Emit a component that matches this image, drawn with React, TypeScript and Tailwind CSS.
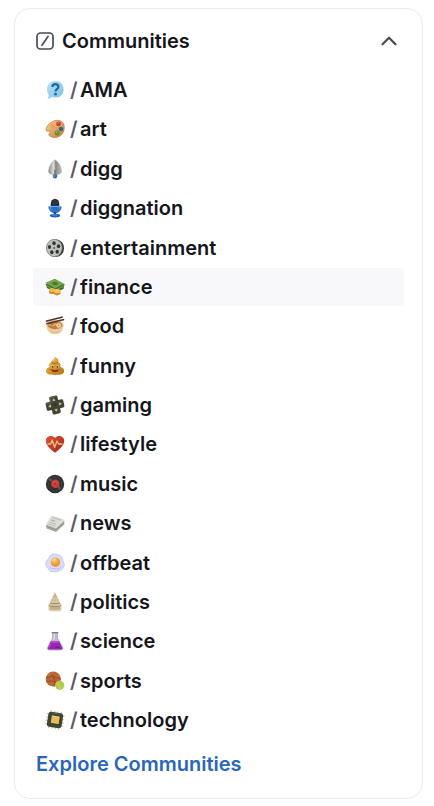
import type { ReactNode } from "react";

type Community = { name: string; icon: ReactNode; active?: boolean };

function Icon({ children }: { children: ReactNode }) {
  return (
    <svg viewBox="0 0 20 20" className="size-5 shrink-0" fill="none" aria-hidden="true">
      {children}
    </svg>
  );
}

const communities: Community[] = [
  {
    name: "AMA",
    icon: (
      <Icon>
        <defs>
          <linearGradient id="bubble" x1="0" y1="0" x2="1" y2="1">
            <stop stopColor="#b7e4fa" />
            <stop offset="1" stopColor="#7fc0e6" />
          </linearGradient>
        </defs>
        <path d="M10.5 1C15.4 1 18.6 4.4 18.6 9.2s-3.4 8.3-8.2 8.3c-1.3 0-2.4-.2-3.4-.7-1.2 1.3-2.9 2-4.7 2 .9-1 1.4-2.2 1.4-3.7A8 8 0 0 1 2 9.3C2 4.500 5.600 1 10.500 1Z" fill="url(#bubble)" />
        <path d="M7.300 7c.1-1.900 1.200-2.900 3-2.900 1.900 0 3.100 1 3.100 2.600 0 2.500-2.900 2.300-2.900 4.700" stroke="#23679f" strokeWidth="2.200" />
        <circle cx="10.500" cy="14.200" r="1.400" fill="#23679f" />
      </Icon>
    ),
  },
  {
    name: "art",
    icon: (
      <Icon>
        <defs>
          <linearGradient id="palette" x1="0" y1="0" x2="1" y2="1">
            <stop stopColor="#fbd29a" />
            <stop offset="1" stopColor="#c8783a" />
          </linearGradient>
        </defs>
        <path d="M12.500 1.300c4.300 0 6.800 3 6.800 7.200 0 5.700-4.200 10-9.200 10-3.700 0-6.500-1.500-6.300-3.400.2-1.400 2.200-1.500 1.900-2.500-.4-1-2.900.4-4.300-.9C-.5 9.500 4.800 1.300 12.500 1.300Z" fill="url(#palette)" stroke="#b9682b" strokeWidth=".6" />
        <circle cx="7.300" cy="7" r="2" fill="#efa342" />
        <circle cx="13.500" cy="4.900" r="2.400" fill="#cf4030" />
        <circle cx="16" cy="9.900" r="2.200" fill="#2b6980" />
        <circle cx="12.200" cy="14" r="2.500" fill="#61942f" />
        <circle cx="13" cy="4" r=".8" fill="#f37c63" />
        <circle cx="11.600" cy="13.300" r=".8" fill="#a1c955" />
      </Icon>
    ),
  },
  {
    name: "digg",
    icon: (
      <Icon>
        <defs>
          <linearGradient id="trowel">
            <stop stopColor="#8d8e8f" />
            <stop offset=".4" stopColor="#deded9" />
            <stop offset=".55" stopColor="#858786" />
            <stop offset="1" stopColor="#c2c2be" />
          </linearGradient>
        </defs>
        <path d="M10 .8c3.500 2.500 6 6 6.600 11 .1 1.800-.8 3-2.400 3.200l-3 .5H9l-3-.5c-1.800-.2-2.600-1.400-2.400-3.200C4 6.800 6.500 3.300 10 .8Z" fill="url(#trowel)" stroke="#9b9c99" strokeWidth=".5" />
        <path d="M9.200 11h1.600v5H9.200z" fill="#747a7c" />
        <path d="M7.800 15.500h4.400v2.300a2.200 1.800 0 0 1-4.400 0Z" fill="#3c6b9a" />
        <path d="M9 16v2" stroke="#83add0" />
      </Icon>
    ),
  },
  {
    name: "diggnation",
    icon: (
      <Icon>
        <path d="M4.200 8.500c0 7.900 11.600 7.900 11.600 0" stroke="#2f6cc5" strokeWidth="1.800" />
        <path d="M5.700 6a4.300 5.200 0 0 1 8.600 0v2.500H5.700Z" fill="#242c3a" />
        <path d="M5.500 7.800h9v2.700c0 5.100-9 5.100-9 0Z" fill="#2d70cc" />
        <path d="M6 8.500h8" stroke="#68a8f3" />
        <path d="M10 14v3" stroke="#184b96" strokeWidth="2.500" />
        <ellipse cx="10" cy="17.600" rx="5.200" ry="1.900" fill="#2461b5" />
        <path d="M7 17h5" stroke="#67a5eb" strokeWidth=".8" />
        <path d="M8 3v3m2-4v4m2-3v3" stroke="#46566b" strokeWidth=".5" />
      </Icon>
    ),
  },
  {
    name: "entertainment",
    icon: (
      <Icon>
        <ellipse cx="11.300" cy="10.200" rx="7.700" ry="8.700" fill="#323535" />
        <ellipse cx="9.300" cy="10" rx="7.900" ry="8.700" fill="#bfc0bc" stroke="#6a6e6c" strokeWidth=".7" />
        <ellipse cx="9" cy="5.200" rx="1.700" ry="2" fill="#303332" />
        <ellipse cx="13.500" cy="8.200" rx="1.700" ry="2" fill="#303332" />
        <ellipse cx="12.200" cy="13.700" rx="1.700" ry="2" fill="#303332" />
        <ellipse cx="6.800" cy="14.200" rx="1.700" ry="2" fill="#303332" />
        <ellipse cx="4.500" cy="9" rx="1.600" ry="2" fill="#303332" />
        <circle cx="9.200" cy="10" r="1" fill="#5a5d5b" />
      </Icon>
    ),
  },
  {
    name: "finance",
    active: true,
    icon: (
      <Icon>
        <path d="M.5 6.500 2 11l7.500 4.500L18.500 12l1-5-10.200 2Z" fill="#416d29" />
        <path d="m.5 5.800 9.300-4L19.500 7 10 11.500Z" fill="#699c42" />
        <path d="m1.300 8.500 8.500 4.700 9-4" stroke="#9dba67" strokeWidth=".7" />
        <path d="m3.200 5.900 6.500-2.800 6.800 3.800-6.600 3.200Z" stroke="#8db55c" strokeWidth=".7" />
        <ellipse cx="10" cy="6.600" rx="2.600" ry="1.500" fill="#48752d" />
        <path d="M4 12.500v3c1 2 5 2 6 0v-3Z" fill="#cf8b2e" />
        <ellipse cx="7" cy="13" rx="3" ry="1.900" fill="#f0b94e" />
        <path d="M9 14v3c1 1.900 5.500 1.900 6.500-.4v-3Z" fill="#d3902e" />
        <ellipse cx="12.200" cy="14" rx="3.200" ry="2" fill="#f7c65c" />
      </Icon>
    ),
  },
  {
    name: "food",
    icon: (
      <Icon>
        <path d="M1.500 8.500c0 7 3.200 9.800 8.500 9.800s8.500-2.800 8.500-9.800Z" fill="#ecd0a1" />
        <ellipse cx="10" cy="9" rx="8.500" ry="5" fill="#e8c391" />
        <ellipse cx="10" cy="9.300" rx="7.200" ry="3.900" fill="#c17b46" />
        <path d="M4 9.500c2-2.500 3 1.500 5-.5s3 1.500 4-1" stroke="#eab568" strokeWidth="1.600" />
        <circle cx="13.700" cy="9.500" r="2.300" fill="#fae2b0" />
        <circle cx="13.700" cy="9.500" r="1.100" fill="#df973e" />
        <path d="M5.500 8.500h2.500" stroke="#788a3e" strokeWidth="1.600" />
        <path d="M.8 5.200 17.800 1M1.200 7.800 19.200 3.500" stroke="#53362b" strokeWidth="1.500" />
        <path d="M5 15c3 2 7 2 10-.3" stroke="#d8b17b" strokeWidth=".8" />
      </Icon>
    ),
  },
  {
    name: "funny",
    icon: (
      <Icon>
        <defs>
          <linearGradient id="swirl" x1="0" y1="0" x2="1" y2="1">
            <stop stopColor="#f3bf4b" />
            <stop offset="1" stopColor="#b96f1b" />
          </linearGradient>
        </defs>
        <path d="M9.500 1c3.300 1 4.800 3 3.800 5.300 2.300.6 3 3 1.800 4.800 2.500.2 4 2 4 3.900 0 2.800-2.500 3.900-9 3.900S1 17.800 1 15c0-2 1.500-3.600 3.800-3.900C3.400 9.300 4 7 6.300 6.300c-.7-2 3.400-2.600 3.200-5.300Z" fill="url(#swirl)" />
        <path d="M6.500 6.700c2 1.200 5 1 6.500-.5M4.500 13.200c2 .6 3 .5 4 0m3 0c1.500.5 3 .5 4-.1" stroke="#9c5b1a" strokeWidth=".8" />
        <circle cx="7.500" cy="10.500" r="1.300" fill="#f8d482" />
        <circle cx="12.500" cy="10.500" r="1.300" fill="#f8d482" />
        <circle cx="7.600" cy="10.800" r=".9" fill="#4b2c0e" />
        <circle cx="12.400" cy="10.800" r=".9" fill="#4b2c0e" />
        <path d="M6.200 14c1 3 6.500 3 7.500 0Z" fill="#70390f" />
        <path d="M7.500 4.800c2-.5 2-1.500 2.200-2" stroke="#ffe081" strokeWidth=".8" />
      </Icon>
    ),
  },
  {
    name: "gaming",
    icon: (
      <Icon>
        <g transform="rotate(-13 10 10)">
          <path d="M7.300 1h5.400q1.500 0 1.500 1.500v3.300h3.300q1.500 0 1.500 1.500v5.400q0 1.500-1.500 1.500h-3.300v3.300q0 1.500-1.500 1.500H7.300q-1.500 0-1.500-1.500v-3.300H2.500Q1 14.200 1 12.700V7.300q0-1.500 1.500-1.500h3.300V2.500Q5.800 1 7.300 1Z" fill="#41433a" />
          <path d="M6.700 6.500V2.300q0-.5.8-.5h5M2 7h4.500" stroke="#6c6e60" strokeWidth=".8" />
          <path d="m10 3.500 1.200 2H8.800Zm0 13-1.200-2h2.400ZM3.500 10l2-1.200v2.400Zm13 0-2-1.200v2.400Z" fill="#d4d04f" stroke="#d4d04f" strokeWidth=".6" />
          <circle cx="10" cy="10" r="1.700" fill="#34362f" />
        </g>
      </Icon>
    ),
  },
  {
    name: "lifestyle",
    icon: (
      <Icon>
        <defs>
          <linearGradient id="heart" x1="0" y1="0" x2="1" y2="1">
            <stop stopColor="#e0563a" />
            <stop offset="1" stopColor="#9c261b" />
          </linearGradient>
        </defs>
        <path d="M10 18.800C4.500 14.500.8 11.200.8 6.800.8 2 7 .3 10 4c3-3.700 9.200-2 9.200 2.800 0 4.400-3.700 7.700-9.200 12Z" fill="url(#heart)" />
        <path d="M2.500 10h3.200l1.500-4 2.400 7.500L12 7l1.500 3h4" stroke="#f6bd83" strokeWidth="1.300" strokeLinejoin="round" />
      </Icon>
    ),
  },
  {
    name: "music",
    icon: (
      <Icon>
        <circle cx="10" cy="10" r="9.200" fill="#303030" />
        <path d="M4 4.500 6.500 7M15.500 15 13 12.500" stroke="#555" strokeWidth="2.500" />
        <circle cx="10" cy="10" r="6.800" stroke="#484848" strokeWidth=".6" />
        <circle cx="10.300" cy="9.800" r="4.300" fill="#c83f38" />
        <path d="M8 9c1-1.600 3.500-1.600 4.500-.6" stroke="#df6257" strokeWidth=".8" />
        <circle cx="10.300" cy="9.800" r=".7" fill="#8b241f" />
      </Icon>
    ),
  },
  {
    name: "news",
    icon: (
      <Icon>
        <path d="m1 11.500 10 3.500 8.300-7.500v4L11 19 1.500 15.500Z" fill="#a9a9a3" />
        <path d="m1 11.500 5-8.200q.5-.7 1.300-.5l11.200 3.400q1.300.4.6 1.600L11 15.500Z" fill="#deded9" />
        <path d="m1.500 13.500 9.500 3.300 8-7.200" stroke="#85857f" strokeWidth=".6" />
        <path d="m7.700 4.500 8.300 2.600M4.500 9.200l6.500 2.200M3.300 11l7 2.400" stroke="#b0b0aa" strokeWidth=".8" />
        <path d="m6.700 6.200 3.800 1.200-1 1.600-3.700-1.200Z" fill="#b9b9b3" />
      </Icon>
    ),
  },
  {
    name: "offbeat",
    icon: (
      <Icon>
        <defs>
          <radialGradient id="yolk" cx=".4" cy=".3">
            <stop stopColor="#fad866" />
            <stop offset="1" stopColor="#ed9339" />
          </radialGradient>
        </defs>
        <path d="M5 3c2-3 4.500-2 7-1.500s5 1.500 5.300 4c.2 2 1.900 3.500 1.900 6.500 0 3.500-2.500 4.500-4.300 5.600-2 1.500-5.200 1-7.200 1.100-3 .2-3.600-1.800-4.700-3.300C1.500 13.500.5 12 1 9.500 1.400 7.500 4 5.500 5 3Z" fill="#d9def8" stroke="#bdc1ea" strokeWidth=".8" />
        <path d="M4.500 13.500c1.500 3 5 2 7 2.500s4-1 5-3" stroke="#c6b5e7" strokeWidth="1" />
        <circle cx="10.500" cy="9.200" r="4.700" fill="url(#yolk)" />
        <path d="M8 7.500c.5-1 1-1.300 2-1.500" stroke="#fff3ae" strokeLinecap="round" />
      </Icon>
    ),
  },
  {
    name: "politics",
    icon: (
      <Icon>
        <path d="M9.600.6h.8l.8 3H8.800ZM8 3.500h4l1 4H7Z" fill="#c9b68f" />
        <path d="M5.200 11c.2-3.800 2-5.500 4.800-5.500s4.600 1.700 4.800 5.500l1.700 1v6.200L14 19.200H6l-2.500-1V12Z" fill="#dac9a5" />
        <path d="M5 11c2.500 1 7.500 1 10 0M4 13.700c3 1 9 1 12 0" stroke="#8a7556" strokeWidth=".8" />
        <path d="M6 14.800v2.500m2-2.200v2.500m2-2.500v2.700m2-2.700v2.500m2-2.800v2.500" stroke="#8d7858" strokeWidth=".7" />
        <path d="M8 7 6.800 10M10 6.500V10m2-3 1.200 3" stroke="#bba47d" strokeWidth=".5" />
      </Icon>
    ),
  },
  {
    name: "science",
    icon: (
      <Icon>
        <path d="M7.500 2h5v5l5.200 9.500c.8 1.500-.3 2.500-2 2.500H4.500c-1.700 0-2.800-1-2-2.500L7.500 7Z" fill="#bebbc8" stroke="#a095b4" strokeWidth=".6" />
        <path d="M6 10h8l3.300 6.700c.5 1.100-.4 1.900-1.800 1.900H4.700c-1.400 0-2.300-.8-1.800-1.900Z" fill="#9826b5" />
        <path d="M6 10h8l.6 1.300c-3 .8-6 .8-9.200 0Z" fill="#be4fca" />
        <path d="M9.300 3v4L8.200 9" stroke="#eeeaf2" strokeWidth="1" />
        <path d="M5.500 13 4 16.300" stroke="#cc66d8" strokeWidth=".8" />
        <path d="M6.700 1.600h6.600" stroke="#807b8b" strokeWidth="1.200" />
        <path d="M10 16.300h4.500" stroke="#711b91" strokeWidth="1.500" />
      </Icon>
    ),
  },
  {
    name: "sports",
    icon: (
      <Icon>
        <circle cx="8.300" cy="8" r="7.600" fill="#bd6535" />
        <path d="M1 7c5-2 10-2 15 1.500M5 1.500c4 3 6 8 4.500 14M1.300 11C6 9 10 10 13 13" stroke="#884420" strokeWidth=".7" />
        <path d="M3.500 4c1-1.200 2.500-1.800 4-1.800" stroke="#dc8a52" strokeLinecap="round" />
        <circle cx="14.700" cy="14.300" r="4.600" fill="#b7ca49" />
        <path d="M11.300 12.300c2.500.5 3.700 2.500 3.400 5.700" stroke="#d8e184" strokeWidth=".7" />
      </Icon>
    ),
  },
  {
    name: "technology",
    icon: (
      <Icon>
        <g transform="rotate(9 10 10)">
          <path d="M5 1v18M8.300 1v18m3.400-18v18M15 1v18M1 5h18M1 8.300h18M1 11.700h18M1 15h18" stroke="#dfc47f" strokeWidth="1.200" />
          <rect x="2.500" y="2.500" width="15" height="15" rx="2.800" fill="#40453a" />
          <path d="M5 3.500h10" stroke="#5c634e" strokeWidth=".8" />
          <rect x="5.700" y="5.500" width="9" height="8.500" rx="1" fill="#e3bb58" stroke="#25281f" strokeWidth=".7" />
          <path d="M6.800 6.500h6.500" stroke="#f2d988" strokeWidth=".8" />
        </g>
      </Icon>
    ),
  },
];

export default function App() {
  return (
    <main className="bg-white py-2 pr-[11px] pl-3.5 font-[Inter,sans-serif] text-xl leading-6 font-semibold text-[#15151b]">
      <nav aria-label="Communities" className="rounded-2xl border border-[#ebebed] px-[18px] pt-3 pb-[22px]">
        <button type="button" aria-expanded="true" className="flex h-10 w-full items-center gap-2 px-[3px]">
          <svg viewBox="0 0 18 18" className="size-[18px]" fill="none" stroke="#4b4a55" strokeWidth="1.700" strokeLinecap="round" aria-hidden="true">
            <rect x="1" y="1" width="16" height="16" rx="3.500" />
            <path d="m6 13.300 6-8.800" />
          </svg>
          <span>Communities</span>
          <svg viewBox="0 0 18 18" className="mr-[3px] ml-auto size-[18px]" fill="none" stroke="#4d4d52" strokeWidth="2.300" strokeLinecap="round" strokeLinejoin="round" aria-hidden="true">
            <path d="m2.500 12.300 6.500-6.500 6.500 6.500" />
          </svg>
        </button>
        <ul className="mt-2.5 flex min-h-[668px] flex-col justify-between">
          {communities.map(({ name, icon, active }) => (
            <li key={name}>
              <a
                href={"#" + name}
                aria-current={active ? "page" : undefined}
                className="flex h-[38px] items-center gap-[5px] rounded px-3 hover:bg-[#f8f8fa] aria-[current=page]:bg-[#f8f8fa]"
              >
                {icon}
                <span className="flex">
                  <span className="w-2.5 text-[#5b5a69]">/</span>
                  <span>{name}</span>
                </span>
              </a>
            </li>
          ))}
        </ul>
        <a href="#explore" className="mt-[13px] ml-[3px] block w-fit text-[#2b66b9]">
          Explore Communities
        </a>
      </nav>
    </main>
  );
}
